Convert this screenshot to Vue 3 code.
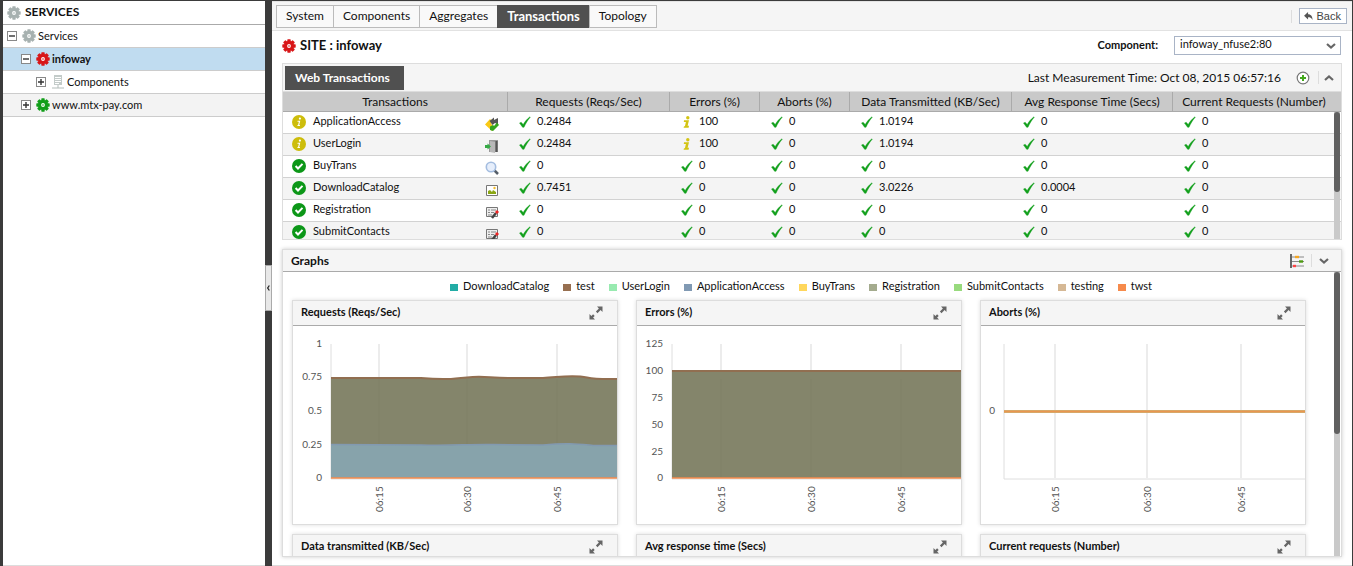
<script setup>
import { ref } from 'vue'

const tree = [
  { label: 'Services', depth: 0, open: true, icon: 'gear', tone: 'grey' },
  { label: 'infoway', depth: 1, open: true, icon: 'gear', tone: 'red', selected: true },
  { label: 'Components', depth: 2, open: false, icon: 'server', tone: 'grey' },
  { label: 'www.mtx-pay.com', depth: 1, open: false, icon: 'gear', tone: 'green', shaded: true },
]

const tabs = ['System', 'Components', 'Aggregates', 'Transactions', 'Topology']
const activeTab = ref('Transactions')
const component = ref('infoway_nfuse2:80')

const columns = [
  'Transactions',
  'Requests (Reqs/Sec)',
  'Errors (%)',
  'Aborts (%)',
  'Data Transmitted (KB/Sec)',
  'Avg Response Time (Secs)',
  'Current Requests (Number)',
]

const rows = [
  { name: 'ApplicationAccess', state: 'info', kind: 'access', values: ['0.2484', '100', '0', '1.0194', '0', '0'] },
  { name: 'UserLogin', state: 'info', kind: 'login', values: ['0.2484', '100', '0', '1.0194', '0', '0'] },
  { name: 'BuyTrans', state: 'ok', kind: 'search', values: ['0', '0', '0', '0', '0', '0'] },
  { name: 'DownloadCatalog', state: 'ok', kind: 'image', values: ['0.7451', '0', '0', '3.0226', '0.0004', '0'] },
  { name: 'Registration', state: 'ok', kind: 'form', values: ['0', '0', '0', '0', '0', '0'] },
  { name: 'SubmitContacts', state: 'ok', kind: 'form', values: ['0', '0', '0', '0', '0', '0'] },
]

const legend = [
  ['DownloadCatalog', 'teal'],
  ['test', 'brown'],
  ['UserLogin', 'mint'],
  ['ApplicationAccess', 'blue'],
  ['BuyTrans', 'yellow'],
  ['Registration', 'olive'],
  ['SubmitContacts', 'lime'],
  ['testing', 'tan'],
  ['twst', 'orange'],
]

const charts = [
  {
    title: 'Requests (Reqs/Sec)',
    left: 38,
    labelX: 29,
    grid: [86, 174, 264],
    y: [['1', 18], ['0.75', 51], ['0.5', 85], ['0.25', 119], ['0', 152]],
    area: 'M38 52 L128 52 C150 54 160 53 174 51.500 C190 49.500 196 52 215 52 L250 52 C268 51 280 48.500 294 51.500 C304 53.500 312 53 324 53',
    low: 'M38 118.500 L128 119 C160 120 174 118 200 118.500 L250 119 C275 116.500 285 118 300 119.500 L324 119.500',
  },
  {
    title: 'Errors (%)',
    left: 35,
    labelX: 26,
    grid: [84, 174, 264],
    y: [['125', 18], ['100', 45], ['75', 72], ['50', 99], ['25', 126], ['0', 152]],
    area: 'M35 45 L324 45',
  },
  {
    title: 'Aborts (%)',
    left: 23,
    labelX: 14,
    grid: [74, 166, 260],
    y: [['0', 85]],
    flat: true,
  },
]
const times = ['06:15', '06:30', '06:45']
const nextTitles = ['Data transmitted (KB/Sec)', 'Avg response time (Secs)', 'Current requests (Number)']
</script>

<template>
  <svg class="symbols" aria-hidden="true">
    <symbol id="gear" viewBox="0 0 14 14">
      <g fill="currentColor">
        <circle cx="7" cy="7" r="5" />
        <rect v-for="n in 8" :key="n" x="5.300" y="0.300" width="3.400" height="3.500" rx="0.600" :transform="`rotate(${n * 45} 7 7)`" />
      </g>
      <circle cx="7" cy="7" r="1.900" fill="#fff" />
      <circle cx="7" cy="7" r="0.800" fill="currentColor" />
    </symbol>
    <symbol id="server" viewBox="0 0 14 14">
      <path d="M3 0h8v10H3z" fill="#c3cbc9" />
      <path d="M4 2.500h6M4 4.500h6M4 6.500h6M4 8.500h4" stroke="#fff" />
      <path d="M7 10v3M1 13h12" stroke="#b3bdba" />
    </symbol>
    <symbol id="tick" viewBox="0 0 12 12">
      <path d="M0.500 7 L2.200 6.300 L4.200 8.500 C6 5.500 8 3 11 0.800 L11.300 1.200 C8.700 4 6.700 7.500 5 11.300 H3.600 Z" fill="#12a01c" stroke="#12a01c" stroke-width="0.400" />
    </symbol>
    <symbol id="info" viewBox="0 0 12 12">
      <circle cx="6.800" cy="1.700" r="1.700" fill="#d3c414" />
      <path d="M3 4.200h5l-1.400 5.600h1.400l-.4 1.900H2.600l.4-1.500h.9l1-4.300H2.800z" fill="#d3c414" />
    </symbol>
    <symbol id="state-info" viewBox="0 0 14 14">
      <circle cx="7" cy="7" r="7" fill="#cdbd0b" />
      <circle cx="7.900" cy="3.600" r="1.100" fill="#fff" />
      <path d="M5.600 5.700h2.700L7.200 10h.9l-.3 1H5.300l.3-1h.5l.8-3.300H5.400z" fill="#fff" />
    </symbol>
    <symbol id="state-ok" viewBox="0 0 14 14">
      <circle cx="7" cy="7" r="7" fill="#0c9718" />
      <path d="M3.600 7l2.400 2.500 4.500-4.600" fill="none" stroke="#fff" stroke-width="2" />
    </symbol>
    <symbol id="kind-access" viewBox="0 0 14 14">
      <path d="M0 7.500l5-5.500 2.500 2.500L6 6.500l3 4L7 14z" fill="#f9c916" />
      <path d="M4.500 4L9 0.500V3l4-2v6.500L10 6 7.500 8z" fill="#555" />
      <path d="M5 9.500l3-1.500 1 1 3-3.500 2 2.500-6 6-3-1z" fill="#35a51d" />
    </symbol>
    <symbol id="kind-login" viewBox="0 0 14 14">
      <path d="M4 1h9v12H4z" fill="#999" />
      <path d="M5 2l5 1v11l-5-1z" fill="#b8b8b8" />
      <path d="M10.500 2h2v11h-2z" fill="#555" />
      <path d="M0 6h2.500V4.500L6 7.500l-3.500 3V9H0z" fill="#35a945" />
    </symbol>
    <symbol id="kind-search" viewBox="0 0 14 14">
      <path d="M9 9l4 4" stroke="#555e69" stroke-width="2.500" />
      <circle cx="6" cy="6" r="4.700" fill="#e6eefb" stroke="#a4bde0" stroke-width="1.600" />
    </symbol>
    <symbol id="kind-image" viewBox="0 0 14 14">
      <path d="M1.500 2.500h11v10h-11z" fill="#fff" stroke="#777" />
      <path d="M3 11V8l2-1 2 2 1-2 3 2v2z" fill="#8ba714" />
      <circle cx="9.500" cy="5" r="1.200" fill="#f3bd2c" />
    </symbol>
    <symbol id="kind-form" viewBox="0 0 14 14">
      <path d="M1.500 2.500h11v9h-11z" fill="#eee" stroke="#777" />
      <path d="M3 5h2M6 5h5M3 7.500h2M6 7.500h3M3 10h4" stroke="#888" />
      <path d="M7 13l4-5" stroke="#444" stroke-width="2.500" />
      <path d="M11 8l2-2" stroke="#e22" stroke-width="2.800" />
    </symbol>
    <symbol id="expand" viewBox="0 0 14 14">
      <path d="M8 0.500h5.500V6L11.600 4.100 8.500 7.200 6.900 5.500 9.900 2.400zM6 13.500H0.500V8l1.900 1.900 1.700-1.700 1.600 1.700-1.600 1.700z" fill="#666" />
    </symbol>
    <symbol id="chevron" viewBox="0 0 12 8">
      <path d="M2 2l4 3.500L10 2" fill="none" stroke="#666" stroke-width="2.200" />
    </symbol>
  </svg>

  <div class="app">
    <aside class="sidebar">
      <h2 class="side-title"><svg class="i14 grey"><use href="#gear" /></svg>SERVICES</h2>
      <ul class="tree">
        <li v-for="node in tree" :key="node.label" :class="['node', 'depth' + node.depth, { selected: node.selected, shaded: node.shaded }]">
          <button class="toggle" :aria-label="node.label">
            <svg viewBox="0 0 8 8"><path :d="node.open ? 'M1 4h6' : 'M1 4h6M4 1v6'" stroke="#333" stroke-width="1.400" /></svg>
          </button>
          <svg :class="['i14', node.tone]"><use :href="'#' + node.icon" /></svg>
          <a href="#">{{ node.label }}</a>
        </li>
      </ul>
    </aside>

    <div class="splitter">
      <button class="collapse" aria-label="Collapse">
        <svg viewBox="0 0 6 8"><path d="M4 1L2 4l2 3" fill="none" stroke="#222" stroke-width="1.500" /></svg>
      </button>
    </div>

    <main class="main">
      <header class="topbar">
        <nav class="tabs">
          <button v-for="tab in tabs" :key="tab" :class="['tab', { active: tab === activeTab }]" @click="activeTab = tab">{{ tab }}</button>
        </nav>
        <span class="divider"></span>
        <button class="back">
          <svg viewBox="0 0 10 9"><path d="M4.500 0v2.500C8 2.500 9.500 5 9.500 9 8 6.500 7 6 4.500 6v2.500L0 4.300z" fill="#555" /></svg>Back
        </button>
      </header>

      <div class="site">
        <svg class="i14 red"><use href="#gear" /></svg>
        <h1>SITE : infoway</h1>
        <label for="component">Component:</label>
        <div class="select">
          <select id="component" v-model="component"><option>infoway_nfuse2:80</option></select>
          <svg class="chev"><use href="#chevron" /></svg>
        </div>
      </div>

      <section class="panel">
        <header class="panel-head">
          <h2 class="pill">Web Transactions</h2>
          <span class="measured">Last Measurement Time: Oct 08, 2015 06:57:16</span>
          <button class="icon-btn" aria-label="Add">
            <svg class="add" viewBox="0 0 14 14"><circle cx="7" cy="7" r="5.800" fill="#fff" stroke="#777" stroke-width="1.200" /><path d="M4 7h6M7 4v6" stroke="#43a81c" stroke-width="2" /></svg>
          </button>
          <span class="divider"></span>
          <button class="icon-btn" aria-label="Collapse panel"><svg class="chev up"><use href="#chevron" /></svg></button>
        </header>
        <div class="table-wrap">
          <table>
            <colgroup><col v-for="(c, i) in columns" :key="c" :class="'c' + i" /></colgroup>
            <thead><tr><th v-for="c in columns" :key="c" scope="col">{{ c }}</th></tr></thead>
            <tbody>
              <tr v-for="row in rows" :key="row.name">
                <td>
                  <div class="name">
                    <svg class="i14 state"><use :href="'#state-' + row.state" /></svg>
                    <span>{{ row.name }}</span>
                    <svg class="i14 kind"><use :href="'#kind-' + row.kind" /></svg>
                  </div>
                </td>
                <td v-for="(v, i) in row.values" :key="i">
                  <div class="value">
                    <svg class="i12"><use :href="v === '100' ? '#info' : '#tick'" /></svg><span>{{ v }}</span>
                  </div>
                </td>
              </tr>
            </tbody>
          </table>
          <div class="track rows-track"><div class="thumb"></div></div>
        </div>
      </section>

      <section class="panel graphs">
        <header class="graphs-head">
          <h2>Graphs</h2>
          <button class="icon-btn" aria-label="Graph settings">
            <svg class="sliders" viewBox="0 0 14 14"><path d="M1 0v14" stroke="#666" stroke-width="2" /><path d="M2 3h12M2 7.500h12M2 12h12" stroke="#888" /><path d="M5 3h4" stroke="#f5a623" stroke-width="2.400" /><path d="M9 7.500h4" stroke="#4d9a10" stroke-width="2.400" /><path d="M3 12h3" stroke="#f44" stroke-width="2.400" /></svg>
          </button>
          <span class="divider"></span>
          <button class="icon-btn" aria-label="Graph list"><svg class="chev"><use href="#chevron" /></svg></button>
        </header>
        <div class="graphs-body">
          <ul class="legend">
            <li v-for="[name, tone] in legend" :key="name"><i :class="['swatch', 'bg-' + tone]"></i>{{ name }}</li>
          </ul>
          <div class="cards">
            <article v-for="c in charts" :key="c.title" class="card">
              <header><h3>{{ c.title }}</h3><button class="icon-btn" :aria-label="'Expand ' + c.title"><svg class="i14"><use href="#expand" /></svg></button></header>
              <svg class="chart" viewBox="0 0 324 198" role="img" :aria-label="c.title">
                <path v-for="g in c.grid" :key="g" :d="`M${g} 18V152`" stroke="#e6e6e6" stroke-width="1.500" />
                <path :d="`M${c.left} 18V153H324`" fill="none" stroke="#dedede" />
                <template v-if="c.area">
                  <path :d="`${c.area} V152 H${c.left} Z`" fill="#84856b" />
                  <path v-for="g in c.grid" :key="g" :d="`M${g} 53V152`" stroke="#808169" />
                  <path v-if="c.low" :d="`${c.low} V152 H38 Z`" fill="#87a3ab" />
                  <path v-if="c.low" :d="c.low" fill="none" stroke="#8299b0" stroke-width="1.500" />
                  <path :d="c.area" fill="none" stroke="#916e50" stroke-width="2" />
                  <path :d="`M${c.left} 152H324`" stroke="#f58b4c" stroke-width="1.500" />
                </template>
                <template v-else>
                  <path d="M23 85.500H324" stroke="#d6a868" stroke-width="3" />
                  <path d="M23 85.500H324" stroke="#ea9650" />
                </template>
                <text v-for="[t, y] in c.y" :key="t" :x="c.labelX" :y="y + 3" text-anchor="end">{{ t }}</text>
                <text v-for="(t, i) in times" :key="t" :transform="`translate(${c.grid[i] + 4} 186) rotate(-90)`">{{ t }}</text>
              </svg>
            </article>
            <article v-for="t in nextTitles" :key="t" class="card">
              <header><h3>{{ t }}</h3><button class="icon-btn" :aria-label="'Expand ' + t"><svg class="i14"><use href="#expand" /></svg></button></header>
            </article>
          </div>
          <div class="track graphs-track"><div class="thumb"></div></div>
        </div>
      </section>
    </main>
  </div>
</template>

<style>
body { margin: 0; background: #3b3b3b; }
</style>

<style scoped>
* { box-sizing: border-box; }
h1, h2, h3, ul { margin: 0; padding: 0; list-style: none; }
button, select { font: inherit; color: inherit; margin: 0; padding: 0; background: none; border: 0; }
svg { display: block; flex: none; }
.symbols { position: absolute; width: 0; height: 0; }
.app {
  display: flex;
  height: 100vh;
  min-height: 480px;
  padding: 1px 1px 0 3px;
  overflow: hidden;
  background: #3b3b3b;
  color: #111;
  font: 11px/14px Lato, "Open Sans", sans-serif;
}
.i14 { width: 14px; height: 14px; }
.i12 { width: 12px; height: 12px; }
.grey { color: #a7b1b0; }
.red { color: #d81618; }
.green { color: #119e19; }

.sidebar { width: 262px; flex: none; background: #fff; border-bottom: 1px solid #ddd; }
.side-title { display: flex; align-items: center; gap: 4px; height: 24px; padding: 0 4px 2px; border-bottom: 1px solid #aaa; font-size: 12px; font-weight: 700; }
.side-title .i14 { margin-top: 3px; }
.node { display: flex; align-items: center; gap: 3px; height: 23px; padding-left: 4px; border-bottom: 1px solid #ccc; }
.depth1 { padding-left: 18px; }
.depth2 { padding-left: 33px; }
.node a { color: inherit; text-decoration: none; }
.selected { background: #c0dcf0; font-weight: 700; }
.shaded { background: #f3f3f3; }
.node a { margin-left: -1px; }
.toggle { width: 10px; height: 10px; border: 1px solid #888; background: #fff; margin-right: 2px; }
.toggle svg { width: 8px; height: 8px; }

.splitter { display: flex; align-items: center; width: 7px; flex: none; background: #3b3b3b; }
.collapse { display: flex; align-items: center; width: 7px; height: 46px; margin-top: 9px; background: #e8e8e8; border: 1px solid #aaa; }
.collapse svg { width: 5px; height: 8px; }

.main { display: flex; flex-direction: column; flex: 1; min-width: 0; background: #fff; border-bottom: 1px solid #ddd; }
.topbar { display: flex; align-items: center; height: 30px; flex: none; padding: 0 5px 0 4px; background: #f5f5f5; border-top: 1px solid #e4e4e4; border-bottom: 1px solid #e2e2e2; }
.tabs { display: flex; flex: 1; font-size: 12px; }
.tab { height: 23px; padding: 0 9px; border: 1px solid #bbb; background: #f9f9f9; }
.tab + .tab { margin-left: -1px; }
.tab.active { background: #505050; border-color: #505050; color: #fff; font-size: 13px; font-weight: 700; }
.divider { width: 1px; height: 13px; background: #ddd; }
.back { display: flex; align-items: center; gap: 4px; height: 16px; margin-left: 7px; padding: 0 5px 0 4px; border: 1px solid #a9b4c6; background: #fff; color: #444; font: 11px/14px "Liberation Sans", Arial, sans-serif; }
.back svg { width: 9px; height: 8px; }

.site { display: flex; align-items: center; height: 32px; flex: none; padding: 0 11px 4px 10px; }
.site .i14 { margin-top: 2px; }
.site h1 { flex: 1; margin-left: 4px; font-size: 13px; font-weight: 700; }
.site label { margin-right: 16px; font-weight: 700; }
.select { position: relative; width: 167px; }
.select select { display: block; appearance: none; width: 100%; height: 19px; padding: 0 22px 2px 5px; border: 1px solid #a9b4c6; background: #fff; }
.chev { width: 12px; height: 8px; }
.select .chev { position: absolute; right: 4px; top: 6px; pointer-events: none; }
.chev.up { transform: rotate(180deg); }

.panel { margin: 0 10px; flex: none; border: 1px solid #ddd; }
.panel-head { display: flex; align-items: center; height: 28px; padding: 0 6px 0 2px; background: #f5f5f5; border-bottom: 1px solid #ddd; }
.pill { height: 24px; padding: 0 14px 0 10px; background: #505050; color: #fff; font-size: 12px; line-height: 23px; font-weight: 700; }
.measured { flex: 1; margin-right: 15px; font-size: 12px; text-align: right; }
.icon-btn { display: flex; align-items: center; justify-content: center; }
.add, .sliders { width: 14px; height: 14px; }
.panel-head .divider { margin: 0 4px 0 8px; }
.graphs-head .divider { margin: 0 6px 0 7px; }

.table-wrap { position: relative; height: 147px; overflow: hidden; }
table { width: 100%; table-layout: fixed; border-collapse: separate; border-spacing: 0; }
.c0 { width: 224px; }
.c1, .c4 { width: 162px; }
.c2, .c3 { width: 90px; }
.c5 { width: 161px; }
.c6 { width: 169px; }
th { height: 20px; padding: 0; background: #c9c9c9; border-bottom: 1px solid #aaa; font-size: 12px; font-weight: 400; white-space: nowrap; }
th + th { border-left: 1px solid #aaa; }
th:last-child { padding-right: 6px; }
td { height: 22px; padding: 0; border-bottom: 1px solid #d2d2d2; }
tbody tr:nth-child(even) td { background: #f4f4f4; }
.name, .value { display: flex; align-items: center; height: 21px; }
.name { gap: 7px; padding: 0 8px 0 9px; }
.name span { flex: 1; }
.name span, .value span { margin-bottom: 3px; }
.state { margin-bottom: 2px; }
.value svg { margin-bottom: 1px; }
.kind { margin-top: 3px; }
.value { gap: 6px; padding-left: 12px; }
.track { position: absolute; right: 1px; bottom: 0; width: 6px; background: #c9c9c9; }
.thumb { background: #606060; border-radius: 3px; }
.rows-track { top: 20px; }
.rows-track .thumb { height: 80px; }

.graphs { display: flex; flex-direction: column; flex: 1; min-height: 0; margin-top: 9px; margin-bottom: 8px; box-shadow: 0 0 4px #ccc; }
.graphs-head { display: flex; align-items: center; height: 22px; flex: none; padding: 0 11px 0 8px; background: #f5f5f5; border-bottom: 1px solid #aaa; }
.graphs-head h2 { flex: 1; font-size: 12px; font-weight: 700; }
.graphs-body { position: relative; flex: 1; min-height: 0; overflow: hidden; padding: 0 35px 0 9px; }
.legend { display: flex; justify-content: center; gap: 14px; height: 28px; padding-left: 4px; line-height: 28px; }
.legend li { display: flex; align-items: center; gap: 5px; }
.swatch { width: 8px; height: 7px; margin-top: 2px; }
.bg-teal { background: #22aca5; }
.bg-brown { background: #976f50; }
.bg-mint { background: #98eab0; }
.bg-blue { background: #8099b3; }
.bg-yellow { background: #ffd75c; }
.bg-olive { background: #a4ab8e; }
.bg-lime { background: #98da7d; }
.bg-tan { background: #d5b895; }
.bg-orange { background: #f68a4b; }
.cards { display: grid; grid-template-columns: repeat(3, 1fr); gap: 9px 18px; }
.card { min-height: 60px; border: 1px solid #ddd; background: #fff; box-shadow: 0 0 4px #ddd; }
.card header { display: flex; align-items: center; height: 25px; padding: 0 14px 0 8px; background: #f5f5f5; border-bottom: 1px solid #aaa; }
.card h3 { flex: 1; padding-bottom: 2px; font-size: 11px; font-weight: 700; }
.chart { width: 100%; font-size: 10px; }
.chart text { fill: #555; }
.graphs-track { top: 0; }
.graphs-track .thumb { height: 162px; }
</style>
